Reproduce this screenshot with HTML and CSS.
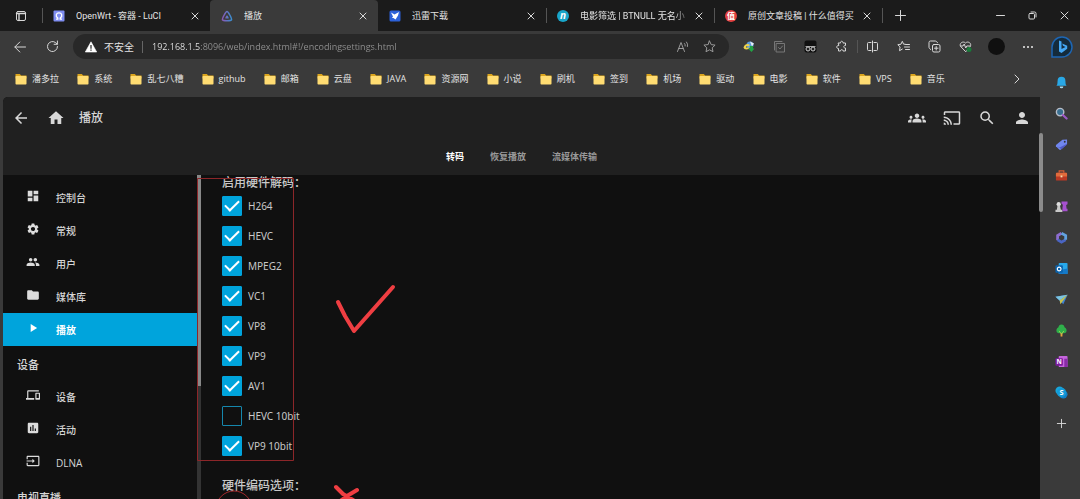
FILE: index.html
```html
<!DOCTYPE html>
<html lang="zh-CN">
<head>
<meta charset="utf-8">
<title>播放</title>
<link rel="stylesheet" href="styles.css">
</head>
<body>
<div class="browser">
  <header class="tabstrip">
    <button class="tab-menu" aria-label="标签页操作"><svg width="12" height="12" viewBox="0 0 12 12" class="line"><rect x="1.5" y="1.5" width="9" height="9" rx="1.5"/><path d="M1.5 3.5h9M4 3.5v7" stroke-width="1.4"/></svg></button>
    <div class="tab divided-left">
      <svg class="favicon" viewBox="0 0 12 12"><rect x=".5" y=".5" width="11" height="11" rx="1" fill="#7f8df0"/><path d="M3 9.2h1.8V8C2 6 3.200 2.800 6 2.800S10 6 7.200 8v1.200H9" fill="none" stroke="#fff" stroke-width="1.300"/></svg>
      <span class="tab-title">OpenWrt - 容器 - LuCI</span>
      <button class="close" aria-label="关闭"><svg width="8" height="8" viewBox="0 0 8 8" class="line"><path d="M1 1l6 6M7 1L1 7"/></svg></button>
    </div>
    <div class="tab active">
      <svg class="favicon" viewBox="0 0 12 12"><defs><linearGradient id="jf"><stop offset="0" stop-color="#8a58b5"/><stop offset="1" stop-color="#3b8ed0"/></linearGradient></defs><path d="M6 1.500C4.800 1.500 .9 8.700 1.500 9.900s8.400 1.200 9 0S7.200 1.500 6 1.500z" fill="none" stroke="url(#jf)" stroke-width="1.500"/><path d="M6 5.200c-.5 0-1.900 2.600-1.700 3s3.200.4 3.400 0S6.500 5.200 6 5.200z" fill="url(#jf)"/></svg>
      <span class="tab-title">播放</span>
      <button class="close" aria-label="关闭"><svg width="8" height="8" viewBox="0 0 8 8" class="line"><path d="M1 1l6 6M7 1L1 7"/></svg></button>
    </div>
    <div class="tab">
      <svg class="favicon" viewBox="0 0 12 12"><rect x=".5" y=".5" width="11" height="11" rx="1.500" fill="#2c61d8"/><path d="M2 2.500l3.500 2L10 2 9 5.500 6.500 9.500 4.500 8 3 8l1-1.500z" fill="#fff"/></svg>
      <span class="tab-title">迅雷下载</span>
      <button class="close" aria-label="关闭"><svg width="8" height="8" viewBox="0 0 8 8" class="line"><path d="M1 1l6 6M7 1L1 7"/></svg></button>
    </div>
    <div class="tab divided-left">
      <svg class="favicon" viewBox="0 0 12 12"><circle cx="6" cy="6" r="6" fill="#19a5c9"/><text x="6" y="9" class="mark italic" font-size="10">n</text></svg>
      <span class="tab-title fade">电影筛选 | BTNULL 无名小</span>
      <button class="close" aria-label="关闭"><svg width="8" height="8" viewBox="0 0 8 8" class="line"><path d="M1 1l6 6M7 1L1 7"/></svg></button>
    </div>
    <div class="tab divided-left">
      <svg class="favicon" viewBox="0 0 12 12"><circle cx="6" cy="6" r="6" fill="#e14040"/><text x="6" y="9" class="mark" font-size="8">值</text></svg>
      <span class="tab-title">原创文章投稿 | 什么值得买</span>
      <button class="close" aria-label="关闭"><svg width="8" height="8" viewBox="0 0 8 8" class="line"><path d="M1 1l6 6M7 1L1 7"/></svg></button>
    </div>
    <button class="new-tab divided-left" aria-label="新建标签页"><svg width="11" height="11" viewBox="0 0 11 11" class="line"><path d="M5.500 .5v10M.5 5.500h10"/></svg></button>
    <div class="window-controls">
      <button aria-label="最小化"><svg width="9" height="9" viewBox="0 0 9 9" class="line"><path d="M.5 4.500h8"/></svg></button>
      <button aria-label="还原"><svg width="9" height="9" viewBox="0 0 9 9" class="line"><rect x="1" y="2.500" width="5.500" height="5.500" rx="1"/><path d="M3 1h3.500a1.500 1.500 0 0 1 1.500 1.500V6"/></svg></button>
      <button aria-label="关闭窗口"><svg width="9" height="9" viewBox="0 0 9 9" class="line"><path d="M1 1l7 7M8 1L1 8"/></svg></button>
    </div>
  </header>

  <div class="toolbar">
    <button class="nav-btn" aria-label="后退"><svg width="12" height="12" viewBox="0 0 12 12" class="line"><path d="M11.500 6H1M5.800 1L.8 6l5 5"/></svg></button>
    <button class="nav-btn" aria-label="刷新"><svg width="13" height="13" viewBox="0 0 13 13" class="line"><path d="M11.500 6.500a5 5 0 1 1-1.700-3.700l1.400 1.300M11.400 1v3.300H8.100"/></svg></button>
    <div class="address">
      <button class="security"><svg width="12" height="12" viewBox="0 0 12 12"><path d="M6 .8L11.700 11H.3z" fill="#fff" stroke="#fff" stroke-linejoin="round" stroke-width=".6"/><path d="M6 4v3.700M6 8.600v1.200" stroke="#222" stroke-width="1.200"/></svg>不安全</button>
      <input class="url" type="text" aria-label="地址" value="192.168.1.5:8096/web/index.html#!/encodingsettings.html">
      <button class="address-btn" aria-label="大声朗读"><svg width="14" height="14" viewBox="0 0 14 14" class="line dim"><path d="M1.500 11.500L5 2.500l3.500 9M2.700 8.500h4.600M8.500 3.500q1 1 .7 2.500M10.500 2q1.700 2 1 4.500"/></svg></button>
      <button class="address-btn" aria-label="收藏"><svg width="13" height="13" viewBox="0 0 13 13" class="line dim"><path d="M6.500 1l1.700 3.600 3.900.5-2.900 2.700.8 3.900-3.500-1.900L3 11.700l.8-3.900L.9 5.100l3.900-.5z"/></svg></button>
    </div>
    <div class="tools">
      <button aria-label="下载扩展"><svg width="13" height="13" viewBox="0 0 13 13"><circle cx="8" cy="5" r="3.500" fill="#5a9ad8"/><path d="M8 1.500l4 2-2 3z" fill="#e7eef5"/><path d="M1.500 7.500C3 3.500 6 3.500 8 5L6.500 6.500C5 5.500 4 6.500 4 7.500h3V9c-3 1-5 .5-5.500-1.500z" fill="#eed34b"/><path d="M8 6l3 0v2.500h1.500L9.500 12 6 8.500h2z" fill="#22a245"/></svg></button>
      <button aria-label="选择扩展"><svg width="13" height="13" viewBox="0 0 13 13" class="line faint"><rect x="3.500" y="3.500" width="8" height="8.500"/><path d="M1.500 10V1.500H9M5.500 7.500l1.500 1.500 2.500-3"/></svg></button>
      <button aria-label="脚本管理"><svg width="13" height="13" viewBox="0 0 13 13"><rect x=".5" y=".5" width="12" height="12" rx="2" fill="#111"/><circle cx="4" cy="9" r="2" class="ring"/><circle cx="9" cy="9" r="2" class="ring"/><path d="M1.500 6.500h10" stroke="#c8c8c8" stroke-width=".8"/></svg></button>
      <button aria-label="扩展"><svg width="13" height="13" viewBox="0 0 13 13" class="line"><path d="M3.500 3h2c-.3-2.300 2.800-2.300 2.500 0h2.500v2.500c-2.300-.2-2.300 2.700 0 2.500V11H8c.2-1.800-2.700-1.800-2.500 0h-2V8.500C1 8.700 1 5.300 3.500 5.500z"/></svg></button>
      <button class="divided-left" aria-label="分屏"><svg width="13" height="13" viewBox="0 0 13 13" class="line"><path d="M5 2.500H2.500a1 1 0 0 0-1 1v6a1 1 0 0 0 1 1H5M8 2.500h2.500a1 1 0 0 1 1 1v6a1 1 0 0 1-1 1H8M6.500 1v11"/></svg></button>
      <button aria-label="收藏夹"><svg width="13" height="13" viewBox="0 0 13 13" class="line"><path d="M8 4.200H6.600L5.300 1.300 4 4.200l-3.200.5 2.300 2.200-.6 3.800 2.800-1.600M8.500 4.500h4M7.500 7h5M8.500 9.500h4"/></svg></button>
      <button aria-label="集锦"><svg width="13" height="13" viewBox="0 0 13 13" class="line"><rect x="4.500" y="4.500" width="7.500" height="7.500" rx="1.500"/><path d="M2.700 9.500C1.500 9 1 8 1 7V2.500A1.500 1.500 0 0 1 2.500 1H7c1 0 2 .5 2.500 1.700M8.200 6.500v3.500M6.500 8.200H10"/></svg></button>
      <button aria-label="浏览器概要"><svg width="13" height="13" viewBox="0 0 13 13" class="line"><path d="M6.500 11.500L1.700 6.500C-.3 3.500 4 .5 6.500 3 9 .5 13.300 3.500 11.300 6.500zM1.500 6h2.500l1.200-2 1.600 4 1-2h3"/><circle cx="10" cy="9.500" r="2.500" fill="#187b39" stroke="none"/></svg></button>
      <button aria-label="个人资料"><span class="avatar"></span></button>
      <button aria-label="设置及其他"><svg width="12" height="12" viewBox="0 0 12 12" fill="#eee"><circle cx="2" cy="6" r="1"/><circle cx="6" cy="6" r="1"/><circle cx="10" cy="6" r="1"/></svg></button>
    </div>
  </div>

  <nav class="bookmarks" aria-label="收藏夹栏">
    <svg class="sprite" width="0" height="0"><symbol id="folder" viewBox="0 0 12 12"><path d="M.5 1h4.300l1.400 1.500h5.300v3H.5z" fill="#dba51e"/><rect x=".5" y="3" width="11" height="8.500" rx=".8" fill="#ffdc72"/></symbol></svg>
    <div class="bookmark-list">
      <a href="#"><svg><use href="#folder"/></svg>潘多拉</a>
      <a href="#"><svg><use href="#folder"/></svg>系统</a>
      <a href="#"><svg><use href="#folder"/></svg>乱七八糟</a>
      <a href="#"><svg><use href="#folder"/></svg>github</a>
      <a href="#"><svg><use href="#folder"/></svg>邮箱</a>
      <a href="#"><svg><use href="#folder"/></svg>云盘</a>
      <a href="#"><svg><use href="#folder"/></svg>JAVA</a>
      <a href="#"><svg><use href="#folder"/></svg>资源网</a>
      <a href="#"><svg><use href="#folder"/></svg>小说</a>
      <a href="#"><svg><use href="#folder"/></svg>刷机</a>
      <a href="#"><svg><use href="#folder"/></svg>签到</a>
      <a href="#"><svg><use href="#folder"/></svg>机场</a>
      <a href="#"><svg><use href="#folder"/></svg>驱动</a>
      <a href="#"><svg><use href="#folder"/></svg>电影</a>
      <a href="#"><svg><use href="#folder"/></svg>软件</a>
      <a href="#"><svg><use href="#folder"/></svg>VPS</a>
      <a href="#"><svg><use href="#folder"/></svg>音乐</a>
    </div>
    <button class="more" aria-label="更多收藏"><svg width="8" height="10" viewBox="0 0 8 10" class="line"><path d="M2 1l4 4-4 4"/></svg></button>
  </nav>

  <div class="page">
    <header class="app-header">
      <div class="app-bar">
        <button aria-label="返回"><svg viewBox="0 0 24 24"><path d="M20 11H7.830l5.590-5.590L12 4l-8 8 8 8 1.410-1.410L7.830 13H20v-2z"/></svg></button>
        <button aria-label="首页"><svg viewBox="0 0 24 24"><path d="M10 20v-6h4v6h5v-8h3L12 3 2 12h3v8z"/></svg></button>
        <h1>播放</h1>
        <div class="app-actions">
          <button aria-label="同步播放"><svg viewBox="0 0 24 24"><path d="M12 12.750c1.630 0 3.070.39 4.240.9 1.080.48 1.760 1.560 1.760 2.730V18H6v-1.610c0-1.180.68-2.260 1.760-2.730 1.170-.52 2.610-.91 4.240-.91zM4 13c1.100 0 2-.9 2-2s-.9-2-2-2-2 .9-2 2 .9 2 2 2zm1.130 1.100C4.760 14.040 4.390 14 4 14c-.99 0-1.930.21-2.780.58C.48 14.900 0 15.620 0 16.430V18h4.500v-1.610c0-.83.23-1.610.63-2.290zM20 13c1.100 0 2-.9 2-2s-.9-2-2-2-2 .9-2 2 .9 2 2 2zm4 3.430c0-.81-.48-1.530-1.220-1.850-.85-.37-1.790-.58-2.780-.58-.39 0-.76.040-1.130.1.400.68.630 1.460.63 2.290V18H24v-1.570zM12 6c1.660 0 3 1.340 3 3s-1.340 3-3 3-3-1.340-3-3 1.340-3 3-3z"/></svg></button>
          <button aria-label="投屏"><svg viewBox="0 0 24 24"><path d="M21 3H3c-1.100 0-2 .9-2 2v3h2V5h18v14h-7v2h7c1.100 0 2-.9 2-2V5c0-1.100-.9-2-2-2zM1 18v3h3c0-1.660-1.340-3-3-3zm0-4v2c2.760 0 5 2.240 5 5h2c0-3.870-3.130-7-7-7zm0-4v2c4.970 0 9 4.030 9 9h2c0-6.080-4.930-11-11-11z"/></svg></button>
          <button aria-label="搜索"><svg viewBox="0 0 24 24"><path d="M15.500 14h-.79l-.28-.27A6.471 6.471 0 0 0 16 9.500 6.500 6.500 0 1 0 9.500 16c1.610 0 3.090-.59 4.230-1.570l.27.28v.79l5 4.990L20.490 19l-4.990-5zm-6 0C7.010 14 5 11.990 5 9.500S7.010 5 9.500 5 14 7.010 14 9.500 11.990 14 9.500 14z"/></svg></button>
          <button aria-label="用户"><svg viewBox="0 0 24 24"><path d="M12 12c2.210 0 4-1.790 4-4s-1.790-4-4-4-4 1.790-4 4 1.790 4 4 4zm0 2c-2.670 0-8 1.340-8 4v2h16v-2c0-2.660-5.330-4-8-4z"/></svg></button>
        </div>
      </div>
      <nav class="app-tabs">
        <a href="#" class="current">转码</a>
        <a href="#">恢复播放</a>
        <a href="#">流媒体传输</a>
      </nav>
    </header>
    <div class="app-body">
      <nav class="drawer">
        <a href="#"><svg viewBox="0 0 24 24"><path d="M3 13h8V3H3v10zm0 8h8v-6H3v6zm10 0h8V11h-8v10zm0-18v6h8V3h-8z"/></svg>控制台</a>
        <a href="#"><svg viewBox="0 0 24 24"><path d="M19.140 12.940c.04-.3.060-.61.060-.94s-.02-.64-.07-.94l2.030-1.580a.49.49 0 0 0 .12-.61l-1.920-3.320a.488.488 0 0 0-.59-.22l-2.390.96c-.5-.38-1.030-.7-1.620-.94l-.36-2.540a.484.484 0 0 0-.48-.41h-3.840c-.24 0-.43.170-.47.410l-.36 2.540c-.59.240-1.130.57-1.620.94l-2.390-.96c-.22-.08-.47 0-.59.220L2.740 8.870c-.12.210-.08.470.12.610l2.030 1.580c-.05.3-.09.630-.09.940s.02.640.07.940l-2.030 1.580a.49.49 0 0 0-.12.610l1.920 3.320c.12.220.37.290.59.220l2.390-.96c.5.380 1.030.7 1.620.94l.36 2.540c.05.240.24.410.48.410h3.840c.24 0 .44-.17.47-.41l.36-2.540c.59-.24 1.130-.56 1.620-.94l2.390.96c.22.080.47 0 .59-.22l1.920-3.320c.12-.22.070-.47-.12-.61l-2.010-1.580zM12 15.600A3.610 3.610 0 0 1 8.400 12c0-1.980 1.620-3.600 3.600-3.600s3.600 1.620 3.600 3.600-1.620 3.600-3.600 3.600z"/></svg>常规</a>
        <a href="#"><svg viewBox="0 0 24 24"><path d="M16 11c1.660 0 2.990-1.340 2.990-3S17.660 5 16 5s-3 1.340-3 3 1.340 3 3 3zm-8 0c1.660 0 2.990-1.340 2.990-3S9.660 5 8 5 5 6.340 5 8s1.340 3 3 3zm0 2c-2.330 0-7 1.170-7 3.500V19h14v-2.500C15 14.170 10.330 13 8 13zm8 0c-.29 0-.62.020-.97.050 1.160.84 1.970 1.970 1.970 3.450V19h6v-2.500c0-2.330-4.670-3.500-7-3.500z"/></svg>用户</a>
        <a href="#"><svg viewBox="0 0 24 24"><path d="M10 4H4c-1.100 0-2 .9-2 2v12c0 1.100.9 2 2 2h16c1.100 0 2-.9 2-2V8c0-1.100-.9-2-2-2h-8l-2-2z"/></svg>媒体库</a>
        <a href="#" class="current"><svg viewBox="0 0 24 24"><path d="M8 5v14l11-7z"/></svg>播放</a>
        <h2>设备</h2>
        <a href="#"><svg viewBox="0 0 24 24"><path d="M4 6h18V4H4c-1.100 0-2 .9-2 2v11H0v3h14v-3H4V6zm19 2h-6c-.55 0-1 .45-1 1v10c0 .55.450 1 1 1h6c.55 0 1-.45 1-1V9c0-.55-.45-1-1-1zm-1 9h-4v-7h4v7z"/></svg>设备</a>
        <a href="#"><svg viewBox="0 0 24 24"><path d="M19 3H5c-1.100 0-2 .9-2 2v14c0 1.100.9 2 2 2h14c1.100 0 2-.9 2-2V5c0-1.100-.9-2-2-2zM9 17H7v-7h2v7zm4 0h-2V7h2v10zm4 0h-2v-4h2v4z"/></svg>活动</a>
        <a href="#"><svg viewBox="0 0 24 24"><path d="M21 3.010H3c-1.100 0-2 .9-2 2V9h2V4.990h18v14.030H3V15H1v4.010c0 1.100.9 1.980 2 1.980h18c1.100 0 2-.88 2-1.980v-14c0-1.110-.9-2-2-2zM11 16l4-4-4-4v3H1v2h10v3z"/></svg>DLNA</a>
        <h2>电视直播</h2>
      </nav>
      <div class="drawer-scroll"><div class="drawer-thumb"></div></div>
      <main class="content">
        <fieldset>
          <legend>启用硬件解码：</legend>
          <label><input type="checkbox" checked>H264</label>
          <label><input type="checkbox" checked>HEVC</label>
          <label><input type="checkbox" checked>MPEG2</label>
          <label><input type="checkbox" checked>VC1</label>
          <label><input type="checkbox" checked>VP8</label>
          <label><input type="checkbox" checked>VP9</label>
          <label><input type="checkbox" checked>AV1</label>
          <label><input type="checkbox">HEVC 10bit</label>
          <label><input type="checkbox" checked>VP9 10bit</label>
        </fieldset>
        <h3>硬件编码选项：</h3>
      </main>
      <svg class="annotations" width="240" height="324" viewBox="0 0 240 324" fill="none">
        <path d="M2.500 3.500h96v282h-96z" stroke="#8c2629"/>
        <circle cx="39" cy="334" r="18" stroke="#a3282c"/>
        <g stroke="#ef3e42" stroke-width="4" stroke-linecap="round" stroke-linejoin="round"><path d="M143 127l7 14 9 15 39-44"/><path d="M141 312l7 7 10 6M162 315l-10 6-8 6"/></g>
      </svg>
    </div>
  </div>

  <aside class="edge-bar" aria-label="侧边栏">
    <button class="bing" aria-label="必应"><svg width="22" height="22" viewBox="0 0 22 22"><path d="M1 21V11A10 10 0 1 1 11 21z" fill="#142b3c" stroke="#1d66b4" stroke-width="1.500"/><path d="M8 4.500l2.500 1v7.500l4-2-2.500-1.200-.8-2.300 5 2.200v3L10.500 17 8 15.500z" fill="#45a8f5"/></svg></button>
    <button aria-label="通知"><svg viewBox="0 0 14 14"><path d="M1.500 10.500C3 9 2.500 7 2.800 5a4.200 4.200 0 0 1 8.400 0c.3 2-.2 4 1.300 5.500z" fill="#29a8e6"/><path d="M5 11.300h4a2 2 0 0 1-4 0z" fill="#a9dcef"/></svg></button>
    <button aria-label="搜索"><svg viewBox="0 0 14 14"><circle cx="5.500" cy="5.500" r="4" fill="#396f91" stroke="#b8bec9" stroke-width="1.500"/><path d="M8.500 8.500l4 4" stroke="#9b59c6" stroke-width="2.300" stroke-linecap="round"/></svg></button>
    <button aria-label="购物"><svg viewBox="0 0 14 14"><path d="M1 7.500L8 2l5-.5v5L6.500 12.500q-1 .8-2 0L1 9z" fill="#7086ee"/><path d="M2 9l5 3.200L13 7v-.8l-8 4z" fill="#5059c5"/><circle cx="10.500" cy="4" r="1" fill="#333"/></svg></button>
    <button aria-label="工具"><svg viewBox="0 0 14 14"><path d="M4.500 4V2h5v2" fill="none" stroke="#d85d35" stroke-width="1.300"/><rect x="1" y="4" width="12" height="8.500" rx="1" fill="#b93924"/><path d="M1 5q0-1 1-1h10q1 0 1 1v3H1z" fill="#e16b3c"/><path d="M6 7h2v2H6z" fill="#f0ddb0"/></svg></button>
    <button aria-label="游戏"><svg viewBox="0 0 14 14"><circle cx="4" cy="4.500" r="2.300" fill="#ddd"/><path d="M2.700 6h2.600l1 4.500H8V13H.5v-2.500H2z" fill="#c8c8c8"/><path d="M7 1.500h6.500v3L12 5.500l.5 4h1V12H8V8.500L8.500 5 7 4z" fill="#a650cf"/></svg></button>
    <button aria-label="Microsoft 365"><svg viewBox="0 0 14 14" fill="none" stroke-width="3"><path d="M7 2.500L2.800 5v5" stroke="#8c6ccf"/><path d="M2.800 9.500L7 12l4.500-2.500" stroke="#4a65c3"/><path d="M7 2.500L11.500 5v4.500" stroke="#61a1df"/></svg></button>
    <button aria-label="Outlook"><svg viewBox="0 0 14 14"><rect x="4" y="1" width="9.500" height="12" rx="1" fill="#28a8ea"/><path d="M4 9l9.500-2v6H4z" fill="#1479c8"/><rect x=".5" y="3.500" width="8" height="8" rx="1" fill="#0b63ad"/><circle cx="4.500" cy="7.500" r="2" fill="none" stroke="#fff" stroke-width="1.200"/></svg></button>
    <button aria-label="Drop"><svg viewBox="0 0 14 14"><path d="M.5 4l13-2-4.500 10z" fill="#3f83d3"/><path d="M.5 4l13-2L5 8z" fill="#7cc4de"/><path d="M5 8l8.500-6L5.800 12z" fill="#c9c34d"/></svg></button>
    <button aria-label="绿植"><svg viewBox="0 0 14 14"><path d="M6 9h2v4.500H6z" fill="#e8a33d"/><path d="M7 .5c2 0 3 1.500 3.300 3C12.500 4.500 13 7 12 9c-1.500 1.500-3 .8-5 .8S3.500 10.500 2 9C1 7 1.500 4.500 3.700 3.500 4 2 5 .5 7 .5z" fill="#2faf4a"/><path d="M4.500 7.500L7 11l2.500-3.500" fill="none" stroke="#9dd552"/></svg></button>
    <button aria-label="OneNote"><svg viewBox="0 0 14 14"><rect x="4" y="1" width="9.500" height="12" rx="1" fill="#c565dc"/><path d="M10 4h3.500v9H10z" fill="#8a2ba8"/><rect x=".5" y="3.500" width="8" height="8" rx="1" fill="#7d1aa0"/><text x="4.500" y="10" class="mark" font-size="7">N</text></svg></button>
    <button aria-label="Skype"><svg viewBox="0 0 14 14"><circle cx="5" cy="5" r="4.500" fill="#18a7dc"/><circle cx="9" cy="9" r="4.500" fill="#117fc7"/><circle cx="7" cy="7" r="5" fill="#139bd8"/><text x="7" y="10" class="mark" font-size="8">S</text></svg></button>
    <button aria-label="添加"><svg viewBox="0 0 14 14" class="line"><path d="M7 2.500v9M2.500 7h9"/></svg></button>
  </aside>
  <div class="page-thumb"></div>
</div>
</body>
</html>
```
FILE: styles.css
```css
* { box-sizing: border-box; }
body {
  margin: 0;
  background: #3a3a3a;
  color: #e4e4e4;
  font: 9px/16px "Open Sans", "Noto Sans CJK SC", sans-serif;
}
button { margin: 0; padding: 0; border: 0; background: none; color: inherit; font: inherit; display: flex; align-items: center; justify-content: center; }
a { color: inherit; text-decoration: none; }
svg { display: block; flex: none; }
.sprite { position: absolute; }
.line { fill: none; stroke: #d8d8d8; stroke-width: 1; stroke-linecap: round; stroke-linejoin: round; }
.dim { stroke: #9a9a9a; }
.faint { stroke: #777; }
.ring { fill: #222; stroke: #ccc; stroke-width: 1; }
.mark { fill: #fff; text-anchor: middle; font-weight: 700; }
.italic { font-style: italic; }

.browser {
  position: relative;
  height: 100vh;
  overflow: hidden;
  display: grid;
  grid-template-columns: 1fr 37px;
  grid-template-rows: 31px 31px 35px 1fr;
}

/* Tab strip */
.tabstrip { grid-column: 1 / -1; display: flex; background: #1b1b1b; }
.tab-menu { width: 42px; }
.tab { position: relative; width: 168px; display: flex; align-items: center; padding: 0 11px; }
.tab.active { background: #3a3a3a; border-radius: 4px 4px 0 0; }
.favicon { width: 12px; height: 12px; }
.tab-title { flex: 1; margin-left: 11px; white-space: nowrap; overflow: hidden; font-family: Roboto, "Noto Sans CJK SC", sans-serif; }
.fade { -webkit-mask: linear-gradient(90deg, #000 85%, transparent); mask: linear-gradient(90deg, #000 85%, transparent); }
.close { width: 12px; height: 16px; justify-content: flex-end; }
.divided-left { position: relative; }
.divided-left::before { content: ""; position: absolute; left: 0; top: 8px; bottom: 8px; width: 1px; background: #555; }
.new-tab { width: 36px; }
.window-controls { margin-left: auto; display: flex; }
.window-controls button { width: 32px; }

/* Toolbar */
.toolbar { display: flex; align-items: center; padding-left: 4px; }
.nav-btn { width: 32px; height: 24px; }
.address { flex: 1; height: 25px; margin-left: 5px; padding: 0 8px 0 12px; display: flex; align-items: center; background: #282828; border-radius: 13px; }
.security { gap: 7px; padding-right: 8px; border-right: 1px solid #666; font-size: 10px; line-height: 12px; }
.url {
  flex: 1; min-width: 0; margin-left: 9px; padding: 0; border: 0; outline: 0;
  font: 9px/16px "Open Sans", "Noto Sans CJK SC", sans-serif;
  color: transparent;
  background: linear-gradient(90deg, #e8e8e8 49px, #929292 49px);
  -webkit-background-clip: text; background-clip: text;
}
.address-btn { width: 28px; }
.address-btn:last-child { width: 24px; }
.tools { display: flex; margin: 0 0 0 4px; }
.tools button { width: 31px; height: 23px; }
.tools .divided-left::before { top: 5px; bottom: 5px; }
.avatar { width: 17px; height: 17px; border-radius: 50%; background: #101010; }

/* Bookmarks */
.bookmarks { grid-column: 1; grid-row: 3; display: flex; align-items: center; padding: 0 0 2px 15px; }
.bookmark-list { flex: 1; display: flex; justify-content: space-between; }
.bookmark-list a { display: flex; align-items: center; gap: 5px; white-space: nowrap; }
.bookmark-list svg { width: 12px; height: 12px; }
.more { width: 98px; padding-left: 46px; }

/* Page */
.page { grid-column: 1; grid-row: 4; min-height: 0; margin: 0 3px; display: flex; flex-direction: column; background: #101010; border-radius: 5px 0 0 0; overflow: hidden; }
.app-header { background: #202020; flex: none; color: #d6d6d6; }
.app-bar { height: 41px; padding-right: 1px; display: flex; align-items: center; }
.app-bar button { width: 35px; height: 35px; }
.app-bar svg { width: 18px; height: 18px; fill: #d8d8d8; }
.app-bar h1 { margin: 0 0 0 6px; font-size: 12px; font-weight: 500; }
.app-actions { margin-left: auto; display: flex; }
.app-tabs { height: 37px; display: flex; justify-content: center; align-items: center; gap: 26px; color: #999; font-weight: 700; }
.app-tabs .current { color: #fff; }
.app-body { position: relative; flex: 1; min-height: 0; display: flex; overflow: hidden; }
.drawer { width: 194px; flex: none; padding-top: 6px; color: #d6d6d6; font-size: 10px; font-weight: 500; }
.drawer a { height: 33px; padding-left: 23px; display: flex; align-items: center; gap: 16px; }
.drawer a.current { background: #00a4dc; color: #fff; font-weight: 700; }
.drawer svg { width: 14px; height: 14px; margin-bottom: 4px; fill: #dcdcdc; }
.drawer .current svg { fill: #fff; }
.drawer h2 { margin: 0; padding: 2px 0 0 14px; height: 34px; font-size: 11px; line-height: 34px; font-weight: 500; }
.drawer-scroll { width: 4px; flex: none; background: #333; }
.drawer-thumb { height: 65%; background: #888; }
.content { flex: 1; padding-left: 21px; color: #c8c8c8; }
.content fieldset { margin: 0; padding: 0; border: 0; }
.content legend, .content h3 { padding: 0; margin: 0; font-size: 12px; line-height: 16px; font-weight: 500; }
.content label { height: 30px; display: flex; align-items: center; gap: 6px; width: max-content; font-family: "Noto Sans", sans-serif; font-size: 10px; }
.content input { appearance: none; margin: 0; width: 20px; height: 20px; border: 1px solid #1587ad; border-radius: 1px; display: grid; place-items: center; }
.content input:checked { background: #00a4dc; border-color: #00a4dc; }
.content input:checked::before { content: ""; width: 12px; height: 6px; margin-bottom: 4px; border: solid #fff; border-width: 0 0 2px 2px; transform: rotate(-45deg); }
.content h3 { margin-top: 17px; }
.annotations { position: absolute; left: 192px; top: 0; pointer-events: none; }

/* Side bar */
.edge-bar { grid-column: 2; grid-row: 2 / 5; display: flex; flex-direction: column; align-items: center; }
.edge-bar button { width: 37px; height: 31px; flex: none; }
.edge-bar .bing { height: 36px; padding-bottom: 4px; }
.edge-bar button:not(.bing) svg { width: 13px; height: 13px; }
.page-thumb { position: absolute; right: 37px; top: 133px; width: 4px; height: 79px; border-radius: 2px; background: #8b8b8b; }
```
